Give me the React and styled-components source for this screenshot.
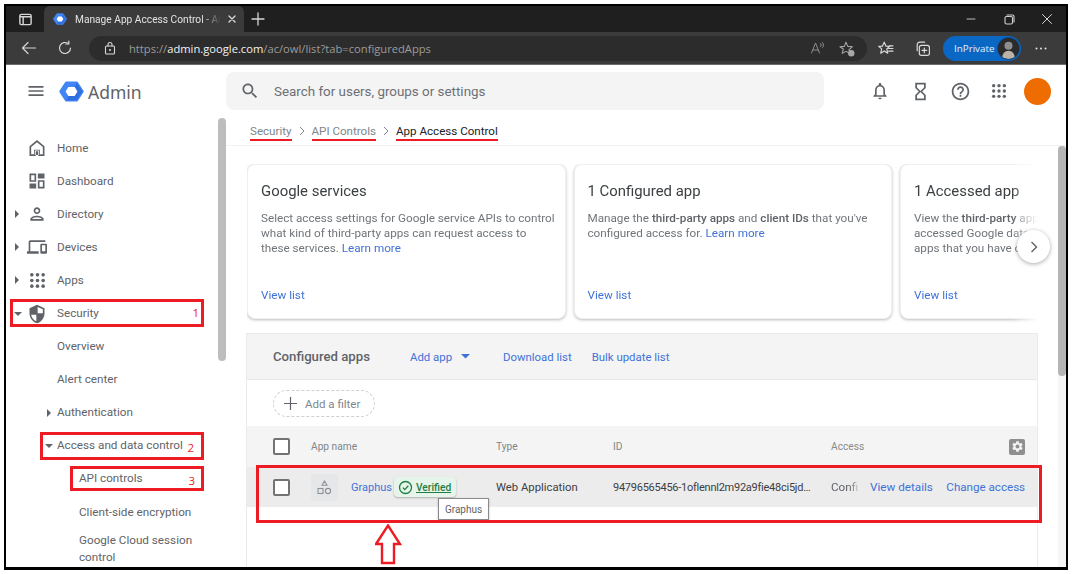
import React from "react";
import styled, { createGlobalStyle } from "styled-components";

const Global = createGlobalStyle`
  html, body { margin: 0; padding: 0; background: #fff; overflow: hidden; }
  * { box-sizing: border-box; }
  body { font-family: Roboto, "Liberation Sans", sans-serif; -webkit-font-smoothing: antialiased; }
`;

const RED = "#ed1c24";
const BLUE = "#3f72d9";

const Frame = styled.div`
  margin: 4px 0 0 4px; width: 1064px; height: 566px; border: 2px solid #000; border-bottom-width: 3px;
  display: flex; flex-direction: column; overflow: hidden; background: #fff;
`;
const TabStrip = styled.div`
  height: 26px; background: #1f1f1f; display: flex; align-items: stretch; flex: none;
`;
const Slot = styled.div`
  width: ${p => p.$w}px; flex: none; display: flex; align-items: center; justify-content: center; color: ${p => p.$c || "#d6d6d6"};
`;
const Tab = styled.div`
  width: 200px; flex: none; background: #3b3b3b; border-radius: 6px 6px 0 0; display: flex; align-items: center;
  padding: 0 2px 0 9px; color: #e2e2e2; font-size: 10.2px;
`;
const TabTitle = styled.div`
  width: 151px; margin-left: 8px; overflow: hidden; white-space: nowrap;
  -webkit-mask-image: linear-gradient(to right, #000 128px, transparent 146px);
`;
const Spacer = styled.div`flex: 1;`;
const Toolbar = styled.div`
  height: 33px; background: #3b3b3b; border-bottom: 1px solid #6d6d6d; display: flex; align-items: center; padding-left: 5px; flex: none;
  font-family: "Open Sans", "Noto Sans", sans-serif;
`;
const AddressPill = styled.div`
  margin-left: 6px; width: 778px; height: 25px; border-radius: 13px; background: #2c2c2c; display: flex; align-items: center; padding: 0 6px 0 12px; flex: none;
`;
const Url = styled.div`
  margin-left: 10px; font-size: 11.2px; color: #9b9b9b; white-space: nowrap; flex: 1;
  b { color: #f2f2f2; font-weight: 400; }
`;
const InPrivate = styled.div`
  margin-left: 2px; width: 78px; height: 25px; border-radius: 13px; background: #0a68c4; display: flex; align-items: center; justify-content: space-between;
  padding: 0 1px 0 11px; color: #e6f1fb; font-size: 9.8px; flex: none;
`;
const PrivateAvatar = styled.div`
  width: 23px; height: 23px; border-radius: 50%; overflow: hidden; flex: none; background: #2a2a2a; display: flex; border: 1px solid #054f99;
`;
const Header = styled.div`
  height: 53px; display: flex; align-items: center; flex: none; padding-bottom: 1px;
`;
const Brand = styled.div`
  width: 220px; flex: none; display: flex; align-items: center; padding-left: 20px;
`;
const BrandName = styled.span`
  margin: 2px 0 0 4px; font-size: 17.5px; color: #5f6368; font-family: "Noto Sans", Roboto, sans-serif;
`;
const SearchBox = styled.div`
  width: 598px; height: 38px; background: #f4f4f4; border-radius: 8px; display: flex; align-items: center; padding-left: 14px; color: #5f6368; flex: none;
`;
const SearchText = styled.span`margin-left: 14px; font-size: 13.4px; color: #6c7075;`;
const HeaderIcons = styled.div`margin-left: 36px; display: flex; align-items: center;`;
const Avatar = styled.div`width: 27px; height: 27px; border-radius: 50%; background: #ef6c00; margin-left: 6px; flex: none;`;

const Body = styled.div`flex: 1; min-height: 0; display: flex;`;
const Sidebar = styled.aside`width: 220px; flex: none; display: flex; overflow: hidden;`;
const NavList = styled.nav`flex: 1; padding-top: 13.5px; min-width: 0;`;
const SideThumb = styled.div`width: 8px; height: 243px; background: #bdbdbd; border-radius: 4px; flex: none;`;
const NavRow = styled.div`
  position: relative; height: ${p => p.$h || 33.1}px; display: flex; align-items: ${p => p.$multi ? "flex-start" : "center"};
  padding-left: ${p => p.$pad}px; padding-top: ${p => p.$multi ? 3 : 0}px;
  font-size: 11.7px; line-height: 17px; color: #5f6368;
`;
const Caret = styled.span`
  width: ${p => p.$w}px; flex: none; display: flex; align-items: center; color: #5f6368;
`;
const NavIcon = styled.span`width: 20px; margin-right: 10px; flex: none; display: flex; justify-content: center; color: #5f6368;`;
const RedBox = styled.div`
  position: absolute; left: ${p => p.$l}px; top: ${p => p.$t}px; width: ${p => p.$w}px; height: ${p => p.$h}px;
  border: 3px solid ${RED}; pointer-events: none;
`;
const RedNum = styled.span`
  position: absolute; right: ${p => p.$r}px; top: ${p => p.$t}px; color: ${RED}; font-size: 11.5px; line-height: 14px; font-family: "Open Sans", sans-serif;
`;
const Main = styled.main`flex: 1; min-width: 0; display: flex; flex-direction: column;`;
const Crumbs = styled.div`
  height: 28px; flex: none; border-bottom: 1px solid #f1f1f1; display: flex; align-items: flex-start; padding: 6px 0 0 24px; font-size: 11.6px; color: #80868b;
`;
const Crumb = styled.span`
  line-height: 15px; border-bottom: 2px solid ${RED}; color: ${p => p.$cur ? "#202124" : "#80868b"};
`;
const CrumbSep = styled.span`width: 20px; flex: none; display: flex; justify-content: center; padding-top: 2px; color: #80868b;`;
const MainBody = styled.div`flex: 1; min-height: 0; display: flex;`;
const Content = styled.div`flex: 1; min-width: 0; padding: 18px 0 0 20px; display: flex; flex-direction: column; overflow: hidden;`;
const MainTrack = styled.div`width: 8px; flex: none; background: #f6f6f6;`;
const MainThumb = styled.div`height: 230px; background: #b5b5b5; border-radius: 4px;`;

const CardsWrap = styled.div`position: relative; margin-left: 1px; width: 791px; flex: none; height: 169px;`;
const CardsViewport = styled.div`
  display: flex; gap: 8px; width: 100%; height: 100%; overflow: hidden; padding-bottom: 6px;
  -webkit-mask-image: linear-gradient(to right, #000 765px, transparent 791px);
`;
const Card = styled.section`
  width: 318.5px; flex: none; height: 155px; background: #fff; border: 1px solid #f0f0f0; border-radius: 8px;
  box-shadow: 0 1px 3px rgba(60,64,67,.35); padding: 16px 13px 15px; display: flex; flex-direction: column;
`;
const CardTitle = styled.h2`margin: 0; font-weight: 400; font-size: 14.9px; line-height: 20px; color: #3c4043;`;
const CardText = styled.p`
  margin: 10px 0 0; font-size: 11.7px; line-height: 15px; color: #70757a; white-space: nowrap;
  b { font-weight: 500; color: #5f6368; }
`;
const Link = styled.a`color: ${BLUE}; font-size: 11.7px; white-space: nowrap;`;
const CardLink = styled(Link)`margin-top: auto; line-height: 15px;`;
const NextButton = styled.div`
  position: absolute; right: -12px; top: 66px; width: 33px; height: 33px; border-radius: 50%; background: #fff; color: #5f6368;
  box-shadow: 0 1px 4px rgba(60,64,67,.45); display: flex; align-items: center; justify-content: center;
`;
const Panel = styled.div`
  width: 792px; flex: 1; border: 1px solid #ebebeb; border-bottom: none; display: flex; flex-direction: column;
`;
const PanelHead = styled.div`
  height: 46px; flex: none; background: #f4f4f4; border-bottom: 1px solid #e8e8e8; display: flex; align-items: center; padding-left: 26px;
`;
const PanelTitle = styled.span`font-size: 13.2px; font-weight: 500; color: #5f6368; width: 137px; flex: none;`;
const HeadLink = styled(Link)`font-size: 11.4px;`;
const AddApp = styled(HeadLink)`display: flex; align-items: center; gap: 9px; width: 93px; flex: none;`;
const BulkLink = styled(HeadLink)`margin-left: 20px;`;
const FilterRow = styled.div`height: 46px; flex: none; padding: 10px 0 0 26px;`;
const FilterChip = styled.div`
  width: 102px; height: 27px; border: 1px dashed #cfcfcf; border-radius: 14px; display: flex; align-items: center; padding-left: 10px; gap: 8px; color: #80868b; font-size: 11.5px;
`;
const GridRow = styled.div`
  position: relative; display: grid; grid-template-columns: 64px 185px 117px 218px 1fr; align-items: center; flex: none; height: ${p => p.$h}px; background: ${p => p.$bg};
`;
const CheckCell = styled.div`padding-left: 26px; display: flex;`;
const Checkbox = styled.div`width: 17px; height: 17px; border: 2px solid #737373; border-radius: 2px; background: #fff;`;
const HeadCell = styled.div`font-size: 10.2px; color: #80868b; display: flex; align-items: center; justify-content: space-between;`;
const GearCell = styled(HeadCell)`padding-right: 12px; color: #8a8a8a;`;
const GearBox = styled.div`width: 16px; height: 16px; background: #8f8f8f; border-radius: 2px; display: flex; align-items: center; justify-content: center;`;
const NameCell = styled.div`display: flex; align-items: center; min-width: 0;`;
const AppIcon = styled.div`width: 27px; height: 27px; border-radius: 3px; background: #e6e7e9; display: flex; align-items: center; justify-content: center; margin-right: 13px; flex: none;`;
const AppName = styled(Link)`width: 40px; flex: none; font-size: 11px;`;
const Chip = styled.div`
  margin-left: 3px; width: 62px; height: 20px; border-radius: 4px; background: #e6f4ea; box-shadow: 0 1px 2px rgba(60,64,67,.35);
  display: flex; align-items: center; padding-left: 4px; gap: 3px; color: #1e7e45; font-size: 10.2px; font-weight: 500; text-decoration: underline; flex: none;
`;
const BodyCell = styled.div`font-size: 11.3px; color: #3c4043; white-space: nowrap;`;
const IdCell = styled(BodyCell)`font-size: 11px; letter-spacing: -.25px;`;
const AccessCell = styled(BodyCell)`display: flex; align-items: center; font-size: 11.7px;`;
const Faded = styled.div`width: 39px; flex: none; overflow: hidden; color: #5f6368; -webkit-mask-image: linear-gradient(to right, #000 18px, transparent 30px);`;
const ChangeLink = styled(Link)`margin-left: 13.5px; font-size: 11.6px;`;
const Tip = styled.div`
  position: absolute; left: 191px; top: 31px; width: 51px; height: 22px; background: #fff; border: 1px solid #8a8a8a; box-shadow: 0 1px 2px rgba(0,0,0,.25);
  display: flex; align-items: center; justify-content: center; font-size: 10px; color: #5f6368;
`;
const UpArrow = styled.svg`position: absolute; left: 128px; top: 57px;`;

const Ico = ({ d, s = 20, c = "currentColor" }) => (
  <svg width={s} height={s} viewBox="0 0 24 24" fill={c} style={{ display: "block" }}><path d={d} /></svg>
);
const Stroke = ({ s = 16, sw = 1.4, v = 16, children }) => (
  <svg width={s} height={s} viewBox={`0 0 ${v} ${v}`} fill="none" stroke="currentColor" strokeWidth={sw} strokeLinecap="round" strokeLinejoin="round" style={{ display: "block" }}>{children}</svg>
);

const P = {
  search: "M15.5 14h-.79l-.28-.27C15.41 12.59 16 11.11 16 9.5 16 5.91 13.09 3 9.5 3S3 5.91 3 9.5 5.91 16 9.5 16c1.61 0 3.09-.59 4.23-1.57l.27.28v.79l5 4.99L20.49 19l-4.99-5zm-6 0C7.01 14 5 11.99 5 9.5S7.01 5 9.5 5 14 7.01 14 9.5 11.99 14 9.5 14z",
  menu: "M3 18h18v-2H3v2zm0-5h18v-2H3v2zm0-7v2h18V6H3z",
  bell: "M12 22c1.1 0 2-.9 2-2h-4c0 1.1.9 2 2 2zm6-6v-5c0-3.07-1.63-5.64-4.5-6.32V4c0-.83-.67-1.5-1.5-1.5s-1.5.67-1.5 1.5v.68C7.64 5.36 6 7.92 6 11v5l-2 2v1h16v-1l-2-2zm-2 1H8v-6c0-2.48 1.51-4.5 4-4.5s4 2.02 4 4.5v6z",
  hourglass: "M6 2v6h.01L6 8.01 10 12l-4 4 .01.01H6V22h12v-5.99h-.01L18 16l-4-4 4-3.99-.01-.01H18V2H6zm10 14.5V20H8v-3.5l4-4 4 4zm-4-5l-4-4V4h8v3.5l-4 4z",
  help: "M11 18h2v-2h-2v2zm1-16C6.48 2 2 6.48 2 12s4.48 10 10 10 10-4.48 10-10S17.52 2 12 2zm0 18c-4.41 0-8-3.59-8-8s3.59-8 8-8 8 3.59 8 8-3.59 8-8 8zm0-14c-2.21 0-4 1.79-4 4h2c0-1.1.9-2 2-2s2 .9 2 2c0 2-3 1.75-3 5h2c0-2.25 3-2.5 3-5 0-2.21-1.79-4-4-4z",
  home: "M12 2.5 3 10v11.5h7.5V16h3v5.5H21V10l-9-7.5zm7 17h-3.5V14h-7v5.5H5v-8.6l7-5.8 7 5.8v8.6z M9.5 15h5v5.5h-5z",
  dash: "M3 3h8v10H3V3zm2 2v6h4V5H5zm8-2h8v6h-8V3zM3 15h8v6H3v-6zm10-4h8v10h-8V11zm2 2v6h4v-6h-4z",
  person: "M12 6c1.1 0 2 .9 2 2s-.9 2-2 2-2-.9-2-2 .9-2 2-2m0 10c2.7 0 5.8 1.29 6 2H6c.23-.72 3.31-2 6-2m0-12C9.79 4 8 5.79 8 8s1.79 4 4 4 4-1.79 4-4-1.79-4-4-4zm0 10c-2.67 0-8 1.34-8 4v2h16v-2c0-2.66-5.33-4-8-4z",
  devices: "M4 6h18V4H4c-1.1 0-2 .9-2 2v11H0v3h14v-3H4V6zm19 2h-6c-.55 0-1 .45-1 1v10c0 .55.45 1 1 1h6c.55 0 1-.45 1-1V9c0-.55-.45-1-1-1zm-1 9h-4v-7h4v7z",
  gear: "M19.14 12.94c.04-.3.06-.61.06-.94 0-.32-.02-.64-.07-.94l2.03-1.58c.18-.14.23-.41.12-.61l-1.92-3.32c-.12-.22-.37-.29-.59-.22l-2.39.96c-.5-.38-1.03-.7-1.62-.94l-.36-2.54c-.04-.24-.24-.41-.48-.41h-3.84c-.24 0-.43.17-.47.41l-.36 2.54c-.59.24-1.13.57-1.62.94l-2.39-.96c-.22-.08-.47 0-.59.22L2.74 8.87c-.12.21-.08.47.12.61l2.03 1.58c-.05.3-.09.63-.09.94s.02.64.07.94l-2.03 1.58c-.18.14-.23.41-.12.61l1.92 3.32c.12.22.37.29.59.22l2.39-.96c.5.38 1.03.7 1.62.94l.36 2.54c.05.24.24.41.48.41h3.84c.24 0 .44-.17.47-.41l.36-2.54c.59-.24 1.13-.56 1.62-.94l2.39.96c.22.08.47 0 .59-.22l1.92-3.32c.12-.22.07-.47-.12-.61l-2.01-1.58zM12 15.6c-1.98 0-3.6-1.62-3.6-3.6s1.62-3.6 3.6-3.6 3.6 1.62 3.6 3.6-1.62 3.6-3.6 3.6z",
};

const Dots = ({ s = 18 }) => (
  <svg width={s} height={s} viewBox="0 0 18 18" fill="currentColor" style={{ display: "block" }}>
    {[3, 9, 15].flatMap(y => [3, 9, 15].map(x => <circle key={`${x}-${y}`} cx={x} cy={y} r="1.9" />))}
  </svg>
);
const Shield = () => (
  <svg width="20" height="20" viewBox="0 0 24 24" style={{ display: "block" }}>
    <path d="M12 1 3 5v6c0 5.55 3.84 10.74 9 12 5.16-1.26 9-6.45 9-12V5l-9-4z" fill="#5f6368" />
    <path d="M12.8 3.6 19 6.3V11.2h-6.2zM5 12.8h6.2v7.9C8 19.4 5.6 16.4 5 12.8z" fill="#fff" />
  </svg>
);
const Logo = ({ s = 25 }) => (
  <svg width={s} height={s} viewBox="0 0 24 24" style={{ display: "block", flex: "none" }}>
    <path d="M7 3.5h10L22.5 12 17 20.5H7L1.5 12z" fill="#4285f4" stroke="#4285f4" strokeWidth="2.4" strokeLinejoin="round" />
    <path d="M15 7.6 17.7 12 15 16.4H9l-2 4.1h10L22.5 12 17 3.5z" fill="#2f6fdf" />
    <path d="M9 7.6h6l2.7 4.4-2.7 4.4H9L6.3 12z" fill="#fff" />
  </svg>
);
const CaretRight = () => (<svg width="6" height="8" viewBox="0 0 6 8" style={{ display: "block" }}><path d="M1 0l4 4-4 4z" fill="currentColor" /></svg>);
const CaretDown = ({ w = 8, c = "currentColor" }) => (<svg width={w} height={w / 2} viewBox="0 0 8 4" style={{ display: "block" }}><path d="M0 0h8L4 4z" fill={c} /></svg>);
const CrumbArrow = () => (<svg width="6" height="10" viewBox="0 0 6 10" fill="none" stroke="currentColor" strokeWidth="1"><path d="M1 1l4 4-4 4" /></svg>);

const Row = ({ pad = 8, caret, caretW = 13, icon, extra, children, ...rest }) => (
  <NavRow $pad={pad} {...rest}>
    {caretW > 0 && <Caret $w={caretW}>{caret === "r" ? <CaretRight /> : caret === "d" ? <CaretDown /> : null}</Caret>}
    {icon && <NavIcon>{icon}</NavIcon>}
    <span>{children}</span>
    {extra}
  </NavRow>
);

export default function App() {
  return (
    <>
      <Global />
      <Frame>
        <TabStrip>
          <Slot $w={38}>
            <Stroke s={15} sw={1.5}><rect x="2" y="2.5" width="12" height="11" rx="1.5" /><path d="M2.5 5h11M5.5 5v8" /></Stroke>
          </Slot>
          <Tab>
            <Logo s={14} />
            <TabTitle>Manage App Access Control - Admin</TabTitle>
            <Slot $w={20}><Stroke s={10} v={10}><path d="M2 2l6 6M8 2l-6 6" /></Stroke></Slot>
          </Tab>
          <Slot $w={28}><Stroke s={14} v={14} sw={1.3}><path d="M7 1v12M1 7h12" /></Stroke></Slot>
          <Spacer />
          <Slot $w={38} $c="#bdbdbd"><Stroke s={10} v={10} sw={1}><path d="M1 5h8" /></Stroke></Slot>
          <Slot $w={38} $c="#d0d0d0"><Stroke s={11} v={11} sw={1.1}><rect x="1" y="2.5" width="7.5" height="7.5" rx="1.5" /><path d="M3 1h5.5A1.5 1.5 0 0 1 10 2.5V8" /></Stroke></Slot>
          <Slot $w={38} $c="#d6d6d6"><Stroke s={12} v={12} sw={1}><path d="M1.5 1.5l9 9M10.5 1.5l-9 9" /></Stroke></Slot>
        </TabStrip>
        <Toolbar>
          <Slot $w={36}><Stroke s={16} sw={1.2}><path d="M14.5 8h-13M7 2.5 1.5 8 7 13.5" /></Stroke></Slot>
          <Slot $w={36}><Stroke s={16} sw={1.2}><path d="M13.5 8A5.5 5.5 0 1 1 11.3 3.6" /><path d="M11.8 1v3h-3" /></Stroke></Slot>
          <AddressPill>
            <Slot $w={18}><Stroke s={14} v={14} sw={1.1}><rect x="2.5" y="5" width="9" height="8" rx="1" /><path d="M5 5V3.5a2 2 0 0 1 4 0V5" /><circle cx="7" cy="9" r=".5" /></Stroke></Slot>
            <Url>https://<b>admin.google.com</b>/ac/owl/list?tab=configuredApps</Url>
            <Slot $w={29} $c="#8e8e8e">
              <Stroke s={16} sw={1}><path d="M1.5 13 5.5 3l4 10M3 10h5M10.5 3.5c.8.7.8 2.3 0 3M12.5 2.5c1.3 1.2 1.3 3.8 0 5" /></Stroke>
            </Slot>
            <Slot $w={29} $c="#a9a9a9">
              <Stroke s={17} sw={1}><path d="M7.5 2 9.2 6l4.3.4-3.3 2.9 1 2-1 .7-2.7-1.3L4 12.6l1-4.2-3.2-2L6 6z" /><circle cx="12.5" cy="12.5" r="2.5" fill="#a9a9a9" /></Stroke>
            </Slot>
          </AddressPill>
          <Slot $w={37} $c="#dcdcdc">
            <Stroke s={17} sw={1.1}><path d="M6.8 2 8.4 5.7l3.6.3-2.8 2.4.9 4-3.3-2.1L3.5 12.4l.9-4L1.6 6l3.6-.3zM11 8h4M11 10.5h4M11.5 5.5h3.5" /></Stroke>
          </Slot>
          <Slot $w={37} $c="#dcdcdc">
            <Stroke s={17} sw={1.1}><path d="M3 10V4.5A2.5 2.5 0 0 1 5.5 2H10" /><rect x="5" y="5" width="9.5" height="9.5" rx="2" /><path d="M9.7 7.5v4.5M7.5 9.7h4.5" /></Stroke>
          </Slot>
          <InPrivate>
            InPrivate
            <PrivateAvatar>
              <svg width="21" height="21" viewBox="0 0 23 23" style={{ display: "block" }}>
                <rect width="23" height="23" fill="#2b2b2b" />
                <circle cx="11.5" cy="8.5" r="4.4" fill="#8e8e8e" />
                <path d="M4.5 23c0-6 3-9 7-9s7 3 7 9z" fill="#b9b3a8" />
              </svg>
            </PrivateAvatar>
          </InPrivate>
          <Slot $w={40} $c="#e4e4e4"><svg width="12" height="3" viewBox="0 0 12 3"><circle cx="1.5" cy="1.5" r="1" fill="currentColor" /><circle cx="6" cy="1.5" r="1" fill="currentColor" /><circle cx="10.5" cy="1.5" r="1" fill="currentColor" /></svg></Slot>
        </Toolbar>
        <Header>
          <Brand>
            <Slot $w={20} $c="#5f6368"><Ico d={P.menu} s={20} /></Slot>
            <Slot $w={13} />
            <Logo s={25} />
            <BrandName>Admin</BrandName>
          </Brand>
          <SearchBox>
            <Ico d={P.search} s={20} />
            <SearchText>Search for users, groups or settings</SearchText>
          </SearchBox>
          <HeaderIcons>
            <Slot $w={40} $c="#5f6368"><Ico d={P.bell} s={20} /></Slot>
            <Slot $w={40} $c="#5f6368"><Ico d={P.hourglass} s={21} /></Slot>
            <Slot $w={40} $c="#5f6368"><Ico d={P.help} s={21} /></Slot>
            <Slot $w={38} $c="#5f6368"><Dots s={16} /></Slot>
            <Avatar />
          </HeaderIcons>
        </Header>
        <Body>
          <Sidebar>
            <NavList>
              <Row icon={<Ico d={P.home} s={20} />}>Home</Row>
              <Row icon={<Ico d={P.dash} s={20} />}>Dashboard</Row>
              <Row caret="r" icon={<Ico d={P.person} s={20} />}>Directory</Row>
              <Row caret="r" icon={<Ico d={P.devices} s={20} />}>Devices</Row>
              <Row caret="r" icon={<Dots s={17} />}>Apps</Row>
              <Row caret="d" icon={<Shield />} extra={<RedBox $l={4} $t={2} $w={194} $h={28}><RedNum $r={2} $t={4}>1</RedNum></RedBox>}>Security</Row>
              <Row pad={51} caretW={0}>Overview</Row>
              <Row pad={51} caretW={0}>Alert center</Row>
              <Row pad={40} caretW={11} caret="r">Authentication</Row>
              <Row pad={39} caretW={12} caret="d" extra={<RedBox $l={34} $t={3} $w={164} $h={28}><RedNum $r={7} $t={6}>2</RedNum></RedBox>}>Access and data control</Row>
              <Row pad={73} caretW={0} extra={<RedBox $l={64} $t={4} $w={134} $h={25}><RedNum $r={6} $t={5}>3</RedNum></RedBox>}>API controls</Row>
              <Row pad={73} caretW={0}>Client-side encryption</Row>
              <Row pad={73} caretW={0} $h={40} $multi>Google Cloud session<br />control</Row>
            </NavList>
            <SideThumb />
          </Sidebar>
          <Main>
            <Crumbs>
              <Crumb>Security</Crumb>
              <CrumbSep><CrumbArrow /></CrumbSep>
              <Crumb>API Controls</Crumb>
              <CrumbSep><CrumbArrow /></CrumbSep>
              <Crumb $cur>App Access Control</Crumb>
            </Crumbs>
            <MainBody>
              <Content>
                <CardsWrap>
                  <CardsViewport>
                    <Card>
                      <CardTitle>Google services</CardTitle>
                      <CardText>Select access settings for Google service APIs to control<br />what kind of third-party apps can request access to<br />these services. <Link>Learn more</Link></CardText>
                      <CardLink>View list</CardLink>
                    </Card>
                    <Card>
                      <CardTitle>1 Configured app</CardTitle>
                      <CardText>Manage the <b>third-party apps</b> and <b>client IDs</b> that you've<br />configured access for. <Link>Learn more</Link></CardText>
                      <CardLink>View list</CardLink>
                    </Card>
                    <Card>
                      <CardTitle>1 Accessed app</CardTitle>
                      <CardText>View the <b>third-party</b> apps<br />accessed Google data<br />apps that you have c</CardText>
                      <CardLink>View list</CardLink>
                    </Card>
                  </CardsViewport>
                  <NextButton>
                    <svg width="8" height="12" viewBox="0 0 8 12" fill="none" stroke="currentColor" strokeWidth="1.4"><path d="M1.5 1l5 5-5 5" /></svg>
                  </NextButton>
                </CardsWrap>
                <Panel>
                  <PanelHead>
                    <PanelTitle>Configured apps</PanelTitle>
                    <AddApp>Add app <CaretDown w={9} c={BLUE} /></AddApp>
                    <HeadLink>Download list</HeadLink>
                    <BulkLink>Bulk update list</BulkLink>
                  </PanelHead>
                  <FilterRow>
                    <FilterChip>
                      <svg width="13" height="13" viewBox="0 0 13 13" stroke="#5f6368" strokeWidth="1.2"><path d="M6.5 0v13M0 6.5h13" /></svg>
                      Add a filter
                    </FilterChip>
                  </FilterRow>
                  <GridRow $h={41} $bg="#f4f4f4">
                    <CheckCell><Checkbox /></CheckCell>
                    <HeadCell>App name</HeadCell>
                    <HeadCell>Type</HeadCell>
                    <HeadCell>ID</HeadCell>
                    <GearCell>Access<GearBox><Ico d={P.gear} s={13} c="#f4f4f4" /></GearBox></GearCell>
                  </GridRow>
                  <GridRow $h={40} $bg="#ececec">
                    <CheckCell><Checkbox /></CheckCell>
                    <NameCell>
                      <AppIcon>
                        <svg width="15" height="15" viewBox="0 0 15 15" fill="none" stroke="#8d9196" strokeWidth="1.1"><path d="M7.5 1 10 5.2H5z" /><rect x="1" y="8.5" width="5" height="5" /><circle cx="11" cy="11" r="2.6" /></svg>
                      </AppIcon>
                      <AppName>Graphus</AppName>
                      <Chip>
                        <svg width="15" height="15" viewBox="0 0 15 15" fill="none" stroke="#1e7e45" strokeWidth="1.3" style={{ flex: "none" }}><circle cx="7.5" cy="7.5" r="6" /><path d="M4.8 7.6l2 2 3.5-3.8" /></svg>
                        Verified
                      </Chip>
                    </NameCell>
                    <BodyCell>Web Application</BodyCell>
                    <IdCell>94796565456-1oflennl2m92a9fie48ci5jd…</IdCell>
                    <AccessCell>
                      <Faded>Confi</Faded>
                      <Link>View details</Link>
                      <ChangeLink>Change access</ChangeLink>
                    </AccessCell>
                    <Tip>Graphus</Tip>
                    <RedBox $l={9} $t={-2} $w={786} $h={58} />
                    <UpArrow width="27" height="41" viewBox="0 0 27 41">
                      <path d="M13 1.5 25 20H19V39H7V20H1z" fill="#fff" stroke={RED} strokeWidth="2.4" strokeLinejoin="miter" />
                    </UpArrow>
                  </GridRow>
                </Panel>
              </Content>
              <MainTrack><MainThumb /></MainTrack>
            </MainBody>
          </Main>
        </Body>
      </Frame>
    </>
  );
}
